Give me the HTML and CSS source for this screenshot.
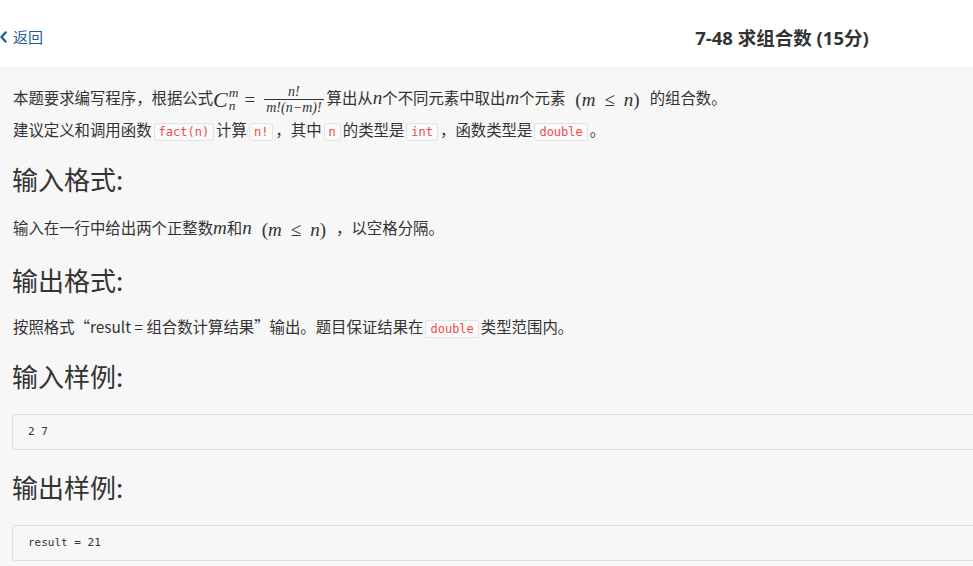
FILE: index.html
```html
<!DOCTYPE html>
<html lang="zh-CN">
<head>
<meta charset="utf-8">
<title>7-48 求组合数</title>
<link rel="stylesheet" href="styles.css">
</head>
<body>
<div class="page">
  <header class="topbar">
    <a class="back" href="#">
      <svg class="chev" width="7" height="12" viewBox="0 0 7 12"><polyline points="5.5,1.5 1.5,6 5.5,10.5" fill="none" stroke="#1f5d9c" stroke-width="2.4" stroke-linecap="round" stroke-linejoin="round"/></svg>
      <span>返回</span>
    </a>
    <h1 class="title">7-48 求组合数 (15分)</h1>
    <div></div>
  </header>
  <main class="content">
    <p class="p-first">本题要求编写程序，根据公式<span class="math"><span class="mi big">C</span><span class="subsup"><span class="sup">m</span><span class="sub">n</span></span><span class="rel">=</span><span class="frac"><span class="num">n!</span><span class="den">m!(n−m)!</span></span></span>算出从<span class="mi">n</span>个不同元素中取出<span class="mi">m</span>个元素<span class="math paren">(<span class="mi">m</span><span class="rel">≤</span><span class="mi">n</span>)</span>的组合数。</p>
    <p>建议定义和调用函数<code>fact(n)</code>计算<code>n!</code>，其中<code>n</code>的类型是<code>int</code>，函数类型是<code>double</code>。</p>
    <h2 class="h-first">输入格式:</h2>
    <p class="p-math">输入在一行中给出两个正整数<span class="mi">m</span>和<span class="mi">n</span><span class="math paren">(<span class="mi">m</span><span class="rel">≤</span><span class="mi">n</span>)</span>，以空格分隔。</p>
    <h2>输出格式:</h2>
    <p class="p-short">按照格式“result = 组合数计算结果”输出。题目保证结果在<code>double</code>类型范围内。</p>
    <h2 class="h-sample">输入样例:</h2>
    <pre class="sample">2 7</pre>
    <h2 class="h-sample">输出样例:</h2>
    <pre class="sample">result = 21</pre>
  </main>
</div>
</body>
</html>
```
FILE: styles.css
```css
html, body {
  margin: 0;
  padding: 0;
  overflow: hidden;
  background: #f7f7f7;
}
body {
  font-family: "Noto Sans CJK SC", "Noto Sans", sans-serif;
  color: #333;
}
.page {
  width: 1564px;
}
.topbar {
  height: 67px;
  background: #fff;
  display: grid;
  grid-template-columns: 1fr auto 1fr;
  align-items: center;
}
.back {
  display: flex;
  align-items: center;
  gap: 6px;
  color: #1f5d9c;
  text-decoration: none;
  font-size: 15px;
  line-height: 20px;
  margin-top: 6px;
}
.title {
  margin: 6px 0 0 0;
  font-family: "Open Sans", "Noto Sans CJK SC", sans-serif;
  font-weight: 700;
  font-size: 18.5px;
  color: #333;
}
.content {
  padding: 14px 12px 0 12px;
  font-size: 15.4px;
}
p {
  margin: 0;
  line-height: 22px;
  height: 22px;
  padding-left: 1px;
}
.p-first {
  line-height: 32px;
  height: 32px;
  margin-bottom: 5px;
}
.p-math {
  line-height: 25px;
  height: 25px;
}
.p-short {
  line-height: 20px;
  height: 20px;
}
h2 {
  margin: 22px 0 18px 0;
  font-weight: 400;
  font-size: 26px;
  line-height: 36px;
  color: #333;
}
.h-first {
  margin-top: 21px;
}
.h-sample {
  margin-bottom: 20px;
}
.sample + h2 {
  margin-top: 19px;
}
code {
  font-family: "DejaVu Sans Mono", "Liberation Mono", monospace;
  font-size: 12px;
  color: #ee4d4d;
  background: #fafafa;
  border: 1px solid #e3e3e3;
  border-radius: 3px;
  padding: 1px 4px;
  margin: 0 2px;
}
.sample {
  margin: 0;
  background: #f7f7f7;
  border: 1px solid #dedede;
  border-radius: 3px;
  padding: 10px 15px 11px;
  font-family: "DejaVu Sans Mono", "Liberation Mono", monospace;
  font-size: 11px;
  line-height: 13px;
  color: #333;
}
.math {
  font-family: "Liberation Serif", serif;
  display: inline-flex;
  align-items: center;
  vertical-align: middle;
  font-size: 19px;
  line-height: 20px;
}
.mi {
  font-family: "Liberation Serif", serif;
  font-style: italic;
  font-size: 19px;
  line-height: 20px;
}
.big {
  font-size: 22px;
}
.subsup {
  display: inline-flex;
  flex-direction: column;
  font-family: "Liberation Serif", serif;
  font-style: italic;
  font-size: 13.5px;
  line-height: 10px;
  margin-left: 1px;
}
.sup { position: relative; top: -2px; }
.sub { position: relative; top: 1px; }
.rel {
  font-style: normal;
  margin: 0 6px;
}
.frac {
  display: inline-flex;
  flex-direction: column;
  align-items: center;
  font-style: italic;
  font-size: 14px;
  line-height: 13px;
  margin: 0 3px 0 3px;
}
.num {
  padding: 0 2px 1px;
}
.den {
  border-top: 1px solid #333;
  padding: 1px 2px 0;
}
.paren {
  margin: 0 10px;
}
.paren .rel {
  margin: 0 9px;
}
```
